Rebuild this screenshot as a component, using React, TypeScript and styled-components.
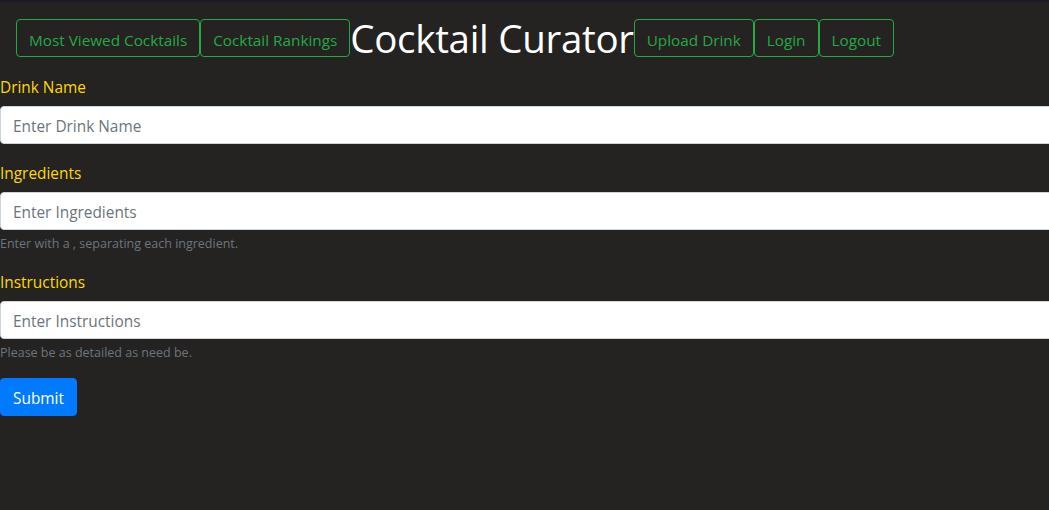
import React from "react";
import styled, { createGlobalStyle } from "styled-components";

const Global = createGlobalStyle`
  html, body { margin: 0; padding: 0; }
  body {
    background: #242322;
    font-family: "Open Sans", "Noto Sans", sans-serif;
    color: #fff;
    overflow: hidden;
    width: 1049px;
    height: 510px;
  }
  * { box-sizing: border-box; }
`;

const Page = styled.div`
  border-top: 2px solid #1c1a22;
  min-height: 510px;
`;

const Header = styled.header`
  display: flex;
  align-items: center;
  padding: 10px 0 10px 16px;
  height: 72px;
`;

const NavButton = styled.button`
  font-family: inherit;
  font-size: 15.3px;
  line-height: 24px;
  height: 38px;
  padding: 8px 12px 4px;
  background: transparent;
  color: #28a745;
  border: 1px solid #28a745;
  border-radius: 4px;
  cursor: pointer;
  white-space: nowrap;
`;

const Title = styled.h1`
  margin: 0;
  font-weight: 400;
  font-size: 38.5px;
  line-height: 48px;
  color: #fff;
  white-space: nowrap;
  letter-spacing: -0.3px;
`;

const Form = styled.form`
  width: 1060px;
`;

const Group = styled.div`
  margin-bottom: 16px;
`;

const Label = styled.label`
  display: block;
  color: #ffd700;
  font-size: 15.4px;
  line-height: 24px;
  padding-top: 2px;
  margin-bottom: 6px;
`;

const Input = styled.input`
  display: block;
  width: 100%;
  height: 38px;
  padding: 7px 12px 5px;
  font-family: inherit;
  font-size: 15.4px;
  line-height: 24px;
  color: #495057;
  background: #fff;
  border: 1px solid #ced4da;
  border-radius: 4px;
  &::placeholder { color: #6c757d; }
`;

const Help = styled.small`
  display: block;
  margin-top: 4px;
  padding-top: 1px;
  font-size: 12.5px;
  line-height: 18px;
  color: #6c757d;
`;

const Submit = styled.button`
  font-family: inherit;
  font-size: 15.4px;
  line-height: 24px;
  height: 38px;
  padding: 8px 12px 4px;
  color: #fff;
  background: #007bff;
  border: 1px solid #007bff;
  border-radius: 4px;
`;

export default function App() {
  return (
    <Page>
      <Global />
      <Header>
        <NavButton>Most Viewed Cocktails</NavButton>
        <NavButton>Cocktail Rankings</NavButton>
        <Title>Cocktail Curator</Title>
        <NavButton>Upload Drink</NavButton>
        <NavButton>Login</NavButton>
        <NavButton>Logout</NavButton>
      </Header>
      <Form onSubmit={(e) => e.preventDefault()}>
        <Group>
          <Label>Drink Name</Label>
          <Input placeholder="Enter Drink Name" />
        </Group>
        <Group>
          <Label>Ingredients</Label>
          <Input placeholder="Enter Ingredients" />
          <Help>Enter with a , separating each ingredient.</Help>
        </Group>
        <Group>
          <Label>Instructions</Label>
          <Input placeholder="Enter Instructions" />
          <Help>Please be as detailed as need be.</Help>
        </Group>
        <Submit type="submit">Submit</Submit>
      </Form>
    </Page>
  );
}
